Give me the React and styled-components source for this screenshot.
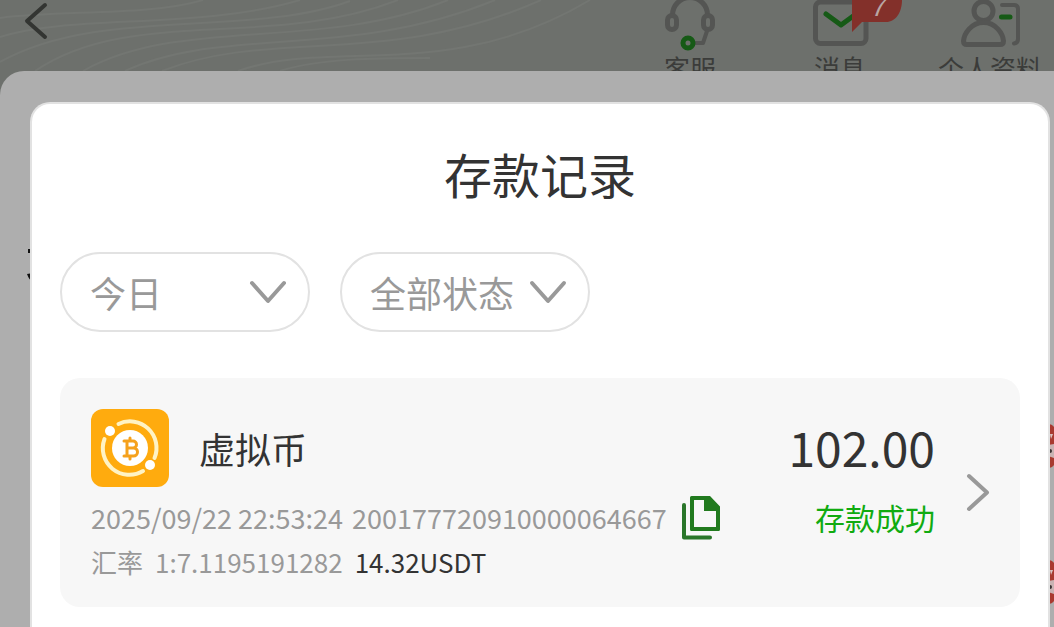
import React from "react";
import styled, { createGlobalStyle } from "styled-components";

export default function App() {
  return (
    <Page>
      <GlobalStyle />
      <Header>
        <Waves />
        <BackButton type="button" aria-label="返回">
          <svg width="28" height="42" viewBox="0 0 28 42">
            <path d="M22 5 L4 21 L22 37" {...line("#333532", 4)} />
          </svg>
        </BackButton>
        <Nav>
          <NavItem href="#service">
            <HeadsetIcon />
            客服
          </NavItem>
          <NavItem href="#message">
            <MessageIcon />
            <Badge>7</Badge>
            消息
          </NavItem>
          <NavItem href="#profile">
            <ProfileIcon />
            个人资料
          </NavItem>
        </Nav>
      </Header>
      <Panel>
        <LeftMarks />
        <TagList>
          <TagEdge />
          <TagEdge />
        </TagList>
      </Panel>
      <Sheet role="dialog" aria-labelledby="sheet-title">
        <Title id="sheet-title">存款记录</Title>
        <Filters>
          <Filter label="日期">
            <option>今日</option>
          </Filter>
          <Filter label="状态">
            <option>全部状态</option>
          </Filter>
        </Filters>
        <Record>
          <RecordMain>
            <RecordHead>
              <CoinIcon />
              <CoinName>虚拟币</CoinName>
            </RecordHead>
            <OrderRow>
              <span>2025/09/22 22:53:24</span>
              <span>200177720910000064667</span>
              <CopyButton type="button" aria-label="复制">
                <CopyIcon />
              </CopyButton>
            </OrderRow>
            <RateRow>
              <span>汇率</span>
              <span>1:7.1195191282</span>
              <Usdt>14.32USDT</Usdt>
            </RateRow>
          </RecordMain>
          <RecordSide>
            <Amount>102.00</Amount>
            <Status>存款成功</Status>
          </RecordSide>
          <DetailButton type="button" aria-label="详情">
            <svg width="24" height="40" viewBox="0 0 24 40">
              <path d="M3 3 L21 19.500 L3 36" {...line("#999", 4)} />
            </svg>
          </DetailButton>
        </Record>
      </Sheet>
    </Page>
  );
}

const line = (stroke, strokeWidth) => ({
  fill: "none",
  stroke,
  strokeWidth,
  strokeLinecap: "round",
  strokeLinejoin: "round",
});

const Filter = ({ label, children }) => (
  <FilterBox>
    <FilterSelect aria-label={label}>{children}</FilterSelect>
    <FilterArrow width="38" height="24" viewBox="0 0 38 24">
      <path d="M3 3 L19 21 L35 3" {...line("#999", 4)} />
    </FilterArrow>
  </FilterBox>
);

const Waves = () => (
  <WaveSvg width="640" height="71" viewBox="0 0 640 71">
    <g fill="none" stroke="#737672" strokeWidth="2">
      <path d="M0 18 C60 10 150 16 203 0" />
      <path d="M0 37 C70 14 200 30 300 0" />
      <path d="M0 62 C100 6 250 38 350 1" />
      <path d="M35 71 C130 6 270 50 398 0" />
      <path d="M83 71 C180 16 320 52 448 0" />
      <path d="M125 71 C220 26 350 60 495 0" />
      <path d="M162 71 C270 28 390 68 541 0" />
      <path d="M238 71 C330 38 450 84 590 0" />
      <path d="M280 71 C320 58 380 58 430 58" />
    </g>
  </WaveSvg>
);

const HeadsetIcon = () => (
  <svg width="104" height="55" viewBox="0 0 104 55">
    <g {...line("#545553", 5)}>
      <path d="M34.500 15 A17.500 17.500 0 0 1 69.500 15" />
      <rect x="29.500" y="15.500" width="9" height="14" rx="4.500" />
      <rect x="65.500" y="15.500" width="9" height="14" rx="4.500" />
      <path d="M69 31 L65 43 H57" strokeWidth="4" />
    </g>
    <circle cx="50" cy="43" r="5" fill="none" stroke="#165a16" strokeWidth="5" />
  </svg>
);

const MessageIcon = () => (
  <svg width="104" height="55" viewBox="0 0 104 55">
    <rect x="27.500" y="2" width="50.500" height="41.500" rx="5" {...line("#545553", 5)} />
    <path d="M38 14 L53 25 L68 14" {...line("#165a16", 5)} />
    <path d="M64 0 V32 L74 22 H98 C108 22 114 12 114 0 Z" fill="#83302a" />
  </svg>
);

const ProfileIcon = () => (
  <svg width="104" height="55" viewBox="0 0 104 55">
    <g {...line("#545553", 5)}>
      <circle cx="45.500" cy="11" r="9.500" />
      <path d="M45.500 22.500 C33 22.500 26 34 25.500 41 Q25.500 44.500 29 44.500 H62 Q65.500 44.500 65.500 41 C65 34 58 22.500 45.500 22.500 Z" />
      <path d="M64 5 H76 Q80 5 80 9 V39 Q80 43 76 43.500" strokeWidth="4" />
    </g>
    <path d="M63.500 17 H72" {...line("#165a16", 5)} />
  </svg>
);

const CoinIcon = () => (
  <svg width="78" height="78" viewBox="0 0 78 78">
    <rect width="78" height="78" rx="12" fill="#ffab0e" />
    <g fill="none" stroke="#fff3c4" strokeWidth="4" strokeLinecap="round">
      <path d="M27.500 15 A26.500 26.500 0 0 1 63.500 49" />
      <path d="M52 62 A26.500 26.500 0 0 1 13.500 30" />
    </g>
    <circle cx="39" cy="39" r="18" fill="#fff" />
    <circle cx="19" cy="22" r="5" fill="#fff" />
    <circle cx="59" cy="56" r="5" fill="#fff" />
    <path
      d="M33 32 H42 A3.500 3.500 0 0 1 42 39 H36 M42 39 H42.500 A4 4 0 0 1 42.500 47 H33 M36 32 V47 M39 29 V32 M39 47 V50"
      {...line("#f5a11c", 3)}
    />
  </svg>
);

const CopyIcon = () => (
  <svg width="38" height="44" viewBox="0 0 38 44">
    <path d="M2 9 V41.500 H28" {...line("#2a762a", 4)} />
    <path
      d="M9.500 0 H28 L38 10.500 V33.500 Q38 35 36.500 35 H9.500 Q8 35 8 33.500 V1.500 Q8 0 9.500 0 Z M12 4 V31 H34 V15 H22 V4 Z"
      fill="#217a1e"
      fillRule="evenodd"
    />
  </svg>
);

// only the edges of these stick out from behind the sheet
const LeftMarks = () => (
  <MarkSvg width="6" height="34" viewBox="0 0 6 34">
    <path d="M1 1 H6 V5 H1 Z M0 26 L6 25 V34 Q2 32 0 26 Z" fill="#111" />
  </MarkSvg>
);

const TagEdge = () => (
  <svg width="6" height="44" viewBox="0 0 6 44">
    <path d="M0 0 Q4 0 6 3 V41 Q4 44 0 44 Z" fill="#a93a30" />
    <path d="M0 21 L6 20 V34 L0 32 Z" fill="#c9b3b3" />
    <path d="M2 10 H5 L3 15 Z" fill="#d9c4c2" />
    <circle cx="2" cy="27" r="2" fill="#3a3333" />
  </svg>
);

const GlobalStyle = createGlobalStyle`
  * {
    box-sizing: border-box;
  }

  body {
    margin: 0;
    background: #6d706c;
    font-family: "Noto Sans CJK SC", sans-serif;
  }

  svg {
    display: block;
    flex-shrink: 0;
  }

  button {
    padding: 0;
    border: 0;
    background: none;
    cursor: pointer;
  }
`;

const Page = styled.div`
  position: relative;
  display: flex;
  flex-direction: column;
  height: 100vh;
  overflow: hidden;
`;

const Header = styled.header`
  position: relative;
  display: flex;
  justify-content: space-between;
  align-items: flex-start;
  height: 71px;
  flex-shrink: 0;
  padding: 0 12px 0 23px;
  overflow: hidden;
`;

const WaveSvg = styled.svg`
  position: absolute;
  top: 0;
  left: 0;
`;

const BackButton = styled.button`
  position: relative;
`;

const Nav = styled.nav`
  display: grid;
  grid-template-columns: repeat(3, 104px);
  gap: 46px;
`;

const NavItem = styled.a`
  position: relative;
  color: #3b3c3a;
  font-size: 26px;
  line-height: 26px;
  text-align: center;
  text-decoration: none;
  white-space: nowrap;

  svg {
    overflow: visible;
  }
`;

const Badge = styled.span`
  position: absolute;
  top: -8px;
  left: 82px;
  color: #b9a5a3;
  font-size: 26px;
  font-style: italic;
`;

const Panel = styled.div`
  display: flex;
  justify-content: space-between;
  flex: 1;
  min-height: 0;
  border-radius: 24px 0 0 0;
  background: #aeaeae;
  overflow: hidden;
`;

const MarkSvg = styled.svg`
  margin: 177px 0 0 27px;
`;

const TagList = styled.div`
  display: flex;
  flex-direction: column;
  gap: 92px;
  padding-top: 353px;
`;

const Sheet = styled.main`
  position: absolute;
  top: 102px;
  right: 4px;
  bottom: 0;
  left: 30px;
  padding: 33px 28px 0;
  border: 2px solid #e2e2e2;
  border-bottom: 0;
  border-radius: 20px 20px 0 0;
  background: #fff;
`;

const Title = styled.h1`
  margin: 0;
  color: #333;
  font-size: 48px;
  font-weight: 400;
  line-height: 72px;
  text-align: center;
`;

const Filters = styled.div`
  display: flex;
  gap: 30px;
  margin: 43px 0 46px;
`;

const FilterBox = styled.div`
  position: relative;
  width: 250px;
`;

const FilterSelect = styled.select`
  appearance: none;
  width: 100%;
  height: 80px;
  padding: 0 28px;
  border: 2px solid #e2e2e2;
  border-radius: 40px;
  background: #fff;
  color: #999;
  font-family: inherit;
  font-size: 36px;
`;

const FilterArrow = styled.svg`
  position: absolute;
  top: 28px;
  right: 23px;
  pointer-events: none;
`;

const Record = styled.article`
  display: flex;
  padding: 31px 30px 23px 31px;
  border-radius: 20px;
  background: #f7f7f7;
`;

const RecordMain = styled.div`
  flex: 1;
`;

const RecordHead = styled.div`
  display: flex;
  align-items: center;
  gap: 30px;
  margin-bottom: 9px;
`;

const CoinName = styled.h2`
  margin: 0;
  color: #333;
  font-size: 36px;
  font-weight: 400;
  line-height: 78px;
`;

const InfoRow = styled.div`
  display: flex;
  align-items: center;
  color: #999;
  line-height: 44px;
  white-space: nowrap;
`;

const OrderRow = styled(InfoRow)`
  gap: 9px;
  font-size: 27px;
`;

const RateRow = styled(InfoRow)`
  gap: 12px;
  font-size: 26px;
`;

const CopyButton = styled.button`
  margin-left: 6px;
`;

const Usdt = styled.strong`
  color: #333;
  font-weight: 400;
`;

const RecordSide = styled.div`
  display: flex;
  flex-direction: column;
  align-items: flex-end;
  gap: 12px;
`;

const Amount = styled.div`
  color: #333;
  font-size: 48px;
  line-height: 74px;
`;

const Status = styled.div`
  color: #10ab10;
  font-size: 30px;
  line-height: 44px;
`;

const DetailButton = styled.button`
  align-self: flex-start;
  margin: 64px 0 0 31px;
`;
